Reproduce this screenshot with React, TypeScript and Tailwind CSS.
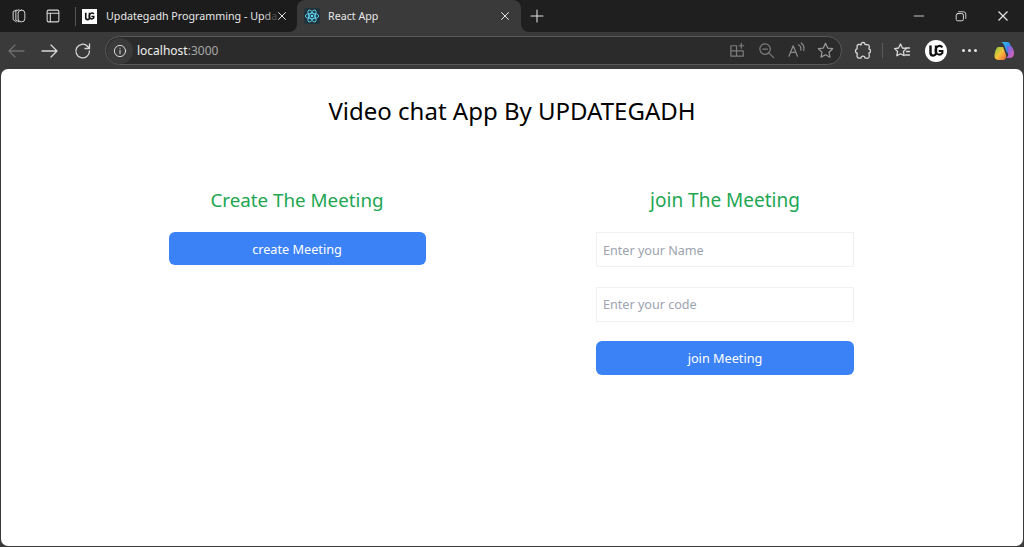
import React from "react";

const UGLogo = ({ size = 16, round = false }: { size?: number; round?: boolean }) => (
  <svg width={size} height={size} viewBox="0 0 24 24">
    {round ? <circle cx="12" cy="12" r="12" fill="#fff" /> : <rect width="24" height="24" fill="#fff" />}
    <path d="M6 6v8a3 3 0 0 0 3 3a3 3 0 0 0 3-3V6" fill="none" stroke="#111" strokeWidth="2.6" />
    <path d="M19 8a4 4 0 0 0-5-1a5 5 0 0 0-1 8a4.500 4.500 0 0 0 6-1v-2h-4" fill="none" stroke="#111" strokeWidth="2.200" />
  </svg>
);

const ReactLogo = () => (
  <svg width="16" height="16" viewBox="0 0 24 24" fill="none" stroke="#61dafb" strokeWidth="1.300">
    <rect width="24" height="24" rx="3" fill="#20323a" stroke="none" />
    <ellipse cx="12" cy="12" rx="10" ry="4" />
    <ellipse cx="12" cy="12" rx="10" ry="4" transform="rotate(60 12 12)" />
    <ellipse cx="12" cy="12" rx="10" ry="4" transform="rotate(120 12 12)" />
    <circle cx="12" cy="12" r="2" fill="#61dafb" stroke="none" />
  </svg>
);

const Ico = ({ children, size = 20, color = "#d4d4d4", w = 1.300 }: { children: React.ReactNode; size?: number; color?: string; w?: number }) => (
  <svg width={size} height={size} viewBox="0 0 20 20" fill="none" stroke={color} strokeWidth={w} strokeLinecap="round" strokeLinejoin="round">
    {children}
  </svg>
);

const Close = ({ s = 12 }: { s?: number }) => (
  <svg width={s} height={s} viewBox="0 0 12 12" stroke="#e5e5e5" strokeWidth="1.200" fill="none">
    <path d="M1.500 1.500l9 9M10.500 1.500l-9 9" />
  </svg>
);

const Copilot = () => (
  <svg width="22" height="22" viewBox="0 0 22 22">
    <defs>
      <linearGradient id="cpA" x1="0" y1="0" x2="1" y2="1">
        <stop offset="0" stopColor="#36c2f0" />
        <stop offset="1" stopColor="#2f5fe0" />
      </linearGradient>
      <linearGradient id="cpB" x1="0" y1="0" x2="1" y2="1">
        <stop offset="0" stopColor="#7ccb3e" />
        <stop offset="0.500" stopColor="#f5c33b" />
        <stop offset="1" stopColor="#f0603a" />
      </linearGradient>
      <linearGradient id="cpC" x1="0" y1="0" x2="1" y2="1">
        <stop offset="0" stopColor="#5b6ff0" />
        <stop offset="1" stopColor="#e85bb0" />
      </linearGradient>
    </defs>
    <path d="M8 2h6c2 0 3 1 3.500 3L20 12l-6 1-3-8C10.500 3.500 9.500 2.500 8 2z" fill="url(#cpA)" />
    <path d="M5 7h5l3 8c.5 2-.5 5-3 5H6c-3 0-5-2-4.500-5C2 12 3 8 5 7z" fill="url(#cpB)" />
    <path d="M14 6h3c2 0 3.500 3 4 6 .3 3-1 6-4 6h-4c2-1 2.500-3 2-5z" fill="url(#cpC)" />
  </svg>
);

export default function App() {
  return (
    <div className="w-[1024px] h-[547px] flex flex-col overflow-hidden bg-[#3a3a3a] font-['Noto_Sans','Open_Sans',sans-serif]">
      {/* Tab strip */}
      <div className="h-[32px] shrink-0 flex items-stretch text-[#e8e8e8]">
        <div className="w-[297px] shrink-0 flex items-stretch bg-[#1c1c1c] rounded-br-[8px]">
          <div className="w-[75px] shrink-0 flex items-center pl-[10px] gap-[16px]">
            <Ico size={18} color="#d6d6d6" w={1.100}>
              <path d="M7 3.500l-3.500 1.500v9l3.500 2.500" />
              <path d="M10 3l-3.500 1.500v10l3.500 2" />
              <rect x="9" y="3.500" width="7.500" height="13" rx="3.500" />
            </Ico>
            <Ico size={18} color="#d6d6d6" w={1.200}>
              <rect x="3.500" y="3.500" width="13" height="13" rx="1.500" />
              <path d="M3.500 7h13M7 7v9.500" />
            </Ico>
          </div>
          <div className="w-px h-[19px] self-center bg-[#555] shrink-0" />
          <div className="flex-1 flex items-center pl-[6px]">
            <UGLogo size={15} />
            <span className="ml-[9px] w-[171px] whitespace-nowrap text-[10.700px]">
              Updategadh Programming - Up<span className="text-[#b0b0b0]">d</span><span className="text-[#555]">a</span>
            </span>
            <Close s={10} />
          </div>
        </div>
        <div className="w-[224px] shrink-0 bg-[#1c1c1c]">
          <div className="h-full flex items-center pl-[7px] bg-[#3a3a3a] rounded-t-[8px]">
            <ReactLogo />
            <span className="ml-[8px] w-[172px] text-[10.700px]">React App</span>
            <Close s={10} />
          </div>
        </div>
        <div className="flex-1 flex items-center bg-[#1f1f1f] rounded-bl-[8px] pl-[8px]">
          <Ico size={16} color="#e5e5e5" w={1.300}>
            <path d="M10 2.500v15M2.500 10h15" />
          </Ico>
          <div className="ml-auto flex items-center">
            <div className="w-[42px] flex justify-center"><Ico size={12} w={1.400} color="#e5e5e5"><path d="M2 10h16" /></Ico></div>
            <div className="w-[42px] flex justify-center">
              <Ico size={12} w={1.500} color="#e5e5e5">
                <rect x="2" y="6" width="12" height="12" rx="2.500" />
                <path d="M6 3h8a4 4 0 0 1 4 4v7" />
              </Ico>
            </div>
            <div className="w-[42px] flex justify-center"><Close s={12} /></div>
          </div>
        </div>
      </div>

      {/* Toolbar */}
      <div className="h-[37px] shrink-0 flex items-center bg-[#3a3a3a]">
        <div className="flex items-center pl-[6px] gap-[13.500px]">
          <Ico size={20} color="#6f6f6f"><path d="M18 10H3M9 4l-6 6 6 6" /></Ico>
          <Ico size={20} color="#d8d8d8"><path d="M2 10h15M11 4l6 6-6 6" /></Ico>
          <Ico size={20} color="#d8d8d8"><path d="M16.500 10a6.800 6.800 0 1 1-2-4.800L16.500 7.500M16.500 3v4.500H12" /></Ico>
        </div>
        <div className="ml-[12px] w-[737px] h-[29px] shrink-0 flex items-center rounded-full border border-[#5a5a5a] bg-[#2b2b2b]">
          <div className="w-[26px] h-[26px] ml-px rounded-full bg-[#3a3a3a] flex items-center justify-center">
            <Ico size={16} color="#e0e0e0" w={1.200}>
              <circle cx="10" cy="10" r="7" />
              <path d="M10 9v4.500M10 6.500v.2" />
            </Ico>
          </div>
          <span className="ml-[4px] text-[12px] text-[#f0f0f0]">localhost<span className="text-[#a8a8a8]">:3000</span></span>
          <div className="ml-auto flex items-center gap-[10.500px] pr-[6px]">
            <Ico size={19} color="#7d7d7d"><path d="M3 5h6v11H3zM9 10.500H16V16H9M3 10.500h6M14 2.500v5M11.500 5h5" /></Ico>
            <Ico size={19} color="#7d7d7d"><circle cx="8.500" cy="8.500" r="5.500" /><path d="M6 8.500h5M12.500 12.500l5 5" /></Ico>
            <Ico size={19} color="#8a8a8a"><path d="M2 16l4.500-11L11 16M3.700 12h5.600M12 4c2 1 3 3 2.500 5.500M15 2c2.500 2 3.500 5 2.500 8" /></Ico>
            <Ico size={19} color="#999"><path d="M10 2.500l2.300 4.900 5.200.7-3.800 3.700 1 5.300L10 14.500 5.300 17l1-5.300L2.500 8.100l5.200-.7z" /></Ico>
          </div>
        </div>
        <div className="ml-[11px] flex items-center">
          <Ico size={20} color="#d8d8d8"><path d="M8 3.500a2 2 0 0 1 4 0c0 .6 3-.8 4 1s-.5 3 0 3.500c2 0 2 4 0 4-.5.500 1 3 0 4.500s-3 .5-4 .5c0-2.500-4-2.500-4 0-2 .5-4 0-4-2s1-2.500 0-3c-2 0-2-4 0-4 .5-1-.5-3 .5-4s3-.5 3.500 0z" /></Ico>
          <div className="w-px h-[15px] bg-[#5a5a5a] ml-[9px]" />
          <div className="ml-[9px]">
            <Ico size={20} color="#d8d8d8"><path d="M8.500 3l1.900 4 4 .6-3 2.900.8 4.200-3.700-2-3.700 2 .8-4.200-3-2.900 4-.6zM13.500 7h4M14.500 10.500h3M13.500 14h4" /></Ico>
          </div>
          <div className="ml-[13px]"><UGLogo size={22} round /></div>
          <div className="ml-[15px] flex gap-[3px]">
            <span className="w-[3px] h-[3px] rounded-full bg-[#e5e5e5]" />
            <span className="w-[3px] h-[3px] rounded-full bg-[#e5e5e5]" />
            <span className="w-[3px] h-[3px] rounded-full bg-[#e5e5e5]" />
          </div>
          <div className="ml-[16px]"><Copilot /></div>
        </div>
      </div>

      {/* Page */}
      <div className="flex-1 mx-[1px] mb-px bg-white rounded-[7px] font-['Noto_Sans',sans-serif]">
        <h1 className="mt-[26px] text-center text-[24px] leading-[32px] text-black">Video chat App By UPDATEGADH</h1>
        <div className="mt-[59px] ml-[82px] w-[856px] grid grid-cols-2">
          <div className="flex flex-col items-center">
            <h2 className="text-[18.800px] leading-[28px] text-[#22a652]">Create The Meeting</h2>
            <button className="mt-[18px] w-[257px] h-[33px] pt-[2px] rounded-[6px] bg-[#3b82f6] text-white text-[12.700px]">create Meeting</button>
          </div>
          <div className="flex flex-col items-center">
            <h2 className="text-[19px] leading-[28px] text-[#22a652]">join The Meeting</h2>
            <input placeholder="Enter your Name" className="mt-[18px] w-[258px] h-[35px] px-[6px] pt-[2px] border border-[#f0f0f0] text-[12.600px] outline-none placeholder:text-[#9ca3af]" />
            <input placeholder="Enter your code" className="mt-[20px] w-[258px] h-[35px] px-[6px] border border-[#f0f0f0] text-[12.600px] outline-none placeholder:text-[#9ca3af]" />
            <button className="mt-[19px] w-[258px] h-[34px] pt-[2px] rounded-[6px] bg-[#3b82f6] text-white text-[12.700px]">join Meeting</button>
          </div>
        </div>
      </div>
    </div>
  );
}
